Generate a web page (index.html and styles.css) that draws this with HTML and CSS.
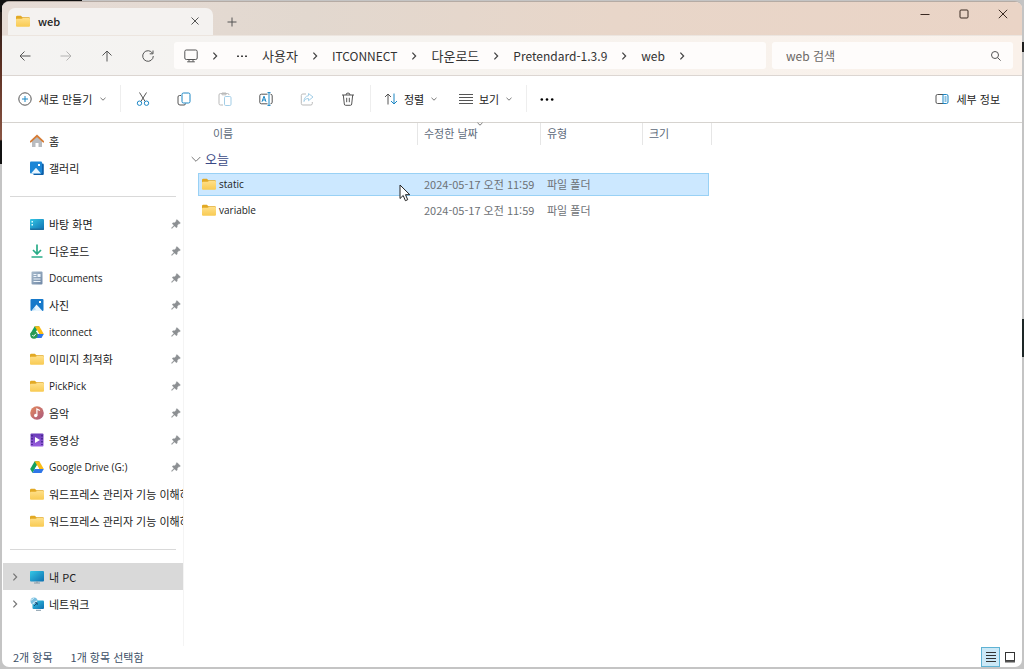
FILE: index.html
```html
<!DOCTYPE html>
<html lang="ko">
<head>
<meta charset="utf-8">
<title>web</title>
<link rel="stylesheet" href="styles.css">
</head>
<body>
<svg class="sprite" aria-hidden="true">
  <defs>
    <linearGradient id="gold" x1="0" y1="0" x2="0" y2="1"><stop offset="0" stop-color="#ffe08a"/><stop offset="1" stop-color="#f8ca52"/></linearGradient>
    <linearGradient id="sea" x1="0" y1="0" x2="1" y2="1"><stop offset="0" stop-color="#35c8e6"/><stop offset="1" stop-color="#0d6fb0"/></linearGradient>
    <linearGradient id="rose" x1="0" y1="0" x2="1" y2="1"><stop offset="0" stop-color="#e58a5c"/><stop offset="1" stop-color="#a8587f"/></linearGradient>
    <linearGradient id="plum" x1="0" y1="0" x2="0" y2="1"><stop offset="0" stop-color="#6a3bb8"/><stop offset="1" stop-color="#9a5fe0"/></linearGradient>
    <linearGradient id="slate" x1="0" y1="0" x2="1" y2="1"><stop offset="0" stop-color="#a9bccd"/><stop offset="1" stop-color="#7088a6"/></linearGradient>
  </defs>
  <symbol id="folder" viewBox="0 0 14 14"><path d="M0 3a1.200 1.200 0 0 1 1.200-1.200h3.600L6.500 3.300H12.800A1.200 1.200 0 0 1 14 4.500V7H0z" fill="#e2a924"/><path d="M0 5.800a1 1 0 0 1 1-1h4.500L7 3.900h6a1 1 0 0 1 1 1v6.900a1 1 0 0 1-1 1H1a1 1 0 0 1-1-1z" fill="url(#gold)"/></symbol>
  <symbol id="pin" viewBox="0 0 10 10"><path d="M6 .6 9.400 4 8.700 4.800 8 4.600 6.300 6.300 6.200 8 5.400 8.800 3.500 6.900.8 9.500.4 9.100 3 6.400 1.200 4.600 2 3.800 3.700 3.700 5.400 2 5.200 1.300z" fill="#8c8f92" stroke="#8c8f92" stroke-width=".4"/></symbol>
  <symbol id="chev" viewBox="0 0 8 8"><path d="M2.700 1.300 5.300 4 2.700 6.700" fill="none" stroke="currentColor"/></symbol>
  <symbol id="down" viewBox="0 0 8 8"><path d="M1.500 2.800 4 5.200 6.500 2.800" fill="none" stroke="currentColor"/></symbol>
  <symbol id="drive" viewBox="0 0 14 14"><path d="M4.700 1.200h4.600L4.700 9.200 2.500 13 .2 9z" fill="#16a05d"/><path d="M4.700 1.200h4.600L13.800 9H9.200z" fill="#fbbc16"/><path d="M4.700 9h9.100l-2.300 4H2.500z" fill="#2f76e8"/><path d="m7 5.200 2.200 3.800H4.700z" fill="#fff"/></symbol>
  <symbol id="photo" viewBox="0 0 14 14"><rect x=".5" y="1" width="13" height="12" rx="1" fill="#1679ca"/><path d="M1.500 13 6.500 6.500 12.500 13z" fill="#e9f6ff"/><path d="m1.500 13 3-3.500L6 11.500z" fill="#b9def7"/><rect x="9" y="3" width="2" height="2" fill="#fff"/></symbol>
</svg>

<div class="window">
  <header class="titlebar">
    <div class="tab">
      <svg class="i14"><use href="#folder"/></svg>
      <span class="tab-name">web</span>
      <button class="flat" aria-label="탭 닫기"><svg class="i10" viewBox="0 0 10 10"><path d="M1.500 1.500l7 7M8.500 1.500l-7 7" class="ln"/></svg></button>
    </div>
    <button class="flat new-tab" aria-label="새 탭"><svg class="i10" viewBox="0 0 10 10"><path d="M5 .5v9M.5 5h9" class="ln"/></svg></button>
    <div class="controls">
      <button class="flat" aria-label="최소화"><svg class="i10" viewBox="0 0 10 10"><path d="M.5 5.500h9" class="dk"/></svg></button>
      <button class="flat" aria-label="최대화"><svg class="i10" viewBox="0 0 10 10"><rect x="1" y="1" width="8" height="8" rx="1" class="dk"/></svg></button>
      <button class="flat" aria-label="닫기"><svg class="i10" viewBox="0 0 10 10"><path d="M.8.8l8.400 8.400M9.200.8.800 9.200" class="dk"/></svg></button>
    </div>
  </header>

  <div class="navbar">
    <div class="arrows">
      <button class="flat" aria-label="뒤로"><svg class="i14" viewBox="0 0 14 14"><path d="M12.500 7H2M6.500 2.500 2 7l4.500 4.500" class="ln"/></svg></button>
      <button class="flat faded" aria-label="앞으로"><svg class="i14" viewBox="0 0 14 14"><path d="M1.500 7H12M7.500 2.500 12 7l-4.500 4.500" class="ln"/></svg></button>
      <button class="flat" aria-label="위로"><svg class="i14" viewBox="0 0 14 14"><path d="M7 12.500V2M2.500 6.500 7 2l4.500 4.500" class="ln"/></svg></button>
      <button class="flat" aria-label="새로 고침"><svg class="i14" viewBox="0 0 14 14"><path d="M11.500 4.200A5.300 5.300 0 1 0 12.300 7M12 1.500v3.300H8.700" class="ln"/></svg></button>
    </div>
    <nav class="address" aria-label="경로">
      <svg class="i14" viewBox="0 0 14 14"><rect x=".8" y="1" width="12.400" height="9.500" rx="1.500" class="ln"/><path d="M5 10.500v2M9 10.500v2M3.200 12.800h7.600" class="ln"/></svg>
      <svg class="i10 sep"><use href="#chev"/></svg>
      <svg class="i12 dots" viewBox="0 0 12 12"><path d="M1 5.500h2v1.500H1zM5 5.500h2v1.500H5zM9 5.500h2v1.500H9z" fill="#444"/></svg>
      <a href="#">사용자</a><svg class="i10 sep"><use href="#chev"/></svg>
      <a href="#" class="latin">ITCONNECT</a><svg class="i10 sep"><use href="#chev"/></svg>
      <a href="#">다운로드</a><svg class="i10 sep"><use href="#chev"/></svg>
      <a href="#" class="latin">Pretendard-1.3.9</a><svg class="i10 sep"><use href="#chev"/></svg>
      <a href="#" class="latin">web</a><svg class="i10 sep"><use href="#chev"/></svg>
    </nav>
    <label class="search">
      <input type="search" placeholder="web 검색" aria-label="web 검색">
      <svg class="i12" viewBox="0 0 12 12"><circle cx="5" cy="5" r="3.500" class="ln"/><path d="m7.600 7.600 3 3" class="ln"/></svg>
    </label>
  </div>

  <div class="commands">
    <button class="flat create"><svg class="i14" viewBox="0 0 14 14"><circle cx="7" cy="7" r="6.200" class="ln"/><path d="M7 4v6M4 7h6" class="bl"/></svg>새로 만들기<svg class="i8"><use href="#down"/></svg></button>
    <div class="tools">
      <button class="flat" aria-label="잘라내기"><svg class="i14" viewBox="0 0 14 14"><path d="M3.500.5 9 9.300M10.500.5 5 9.300" class="ln"/><circle cx="3.500" cy="11.200" r="2.200" class="bl"/><circle cx="10.500" cy="11.200" r="2.200" class="bl"/></svg></button>
      <button class="flat" aria-label="복사"><svg class="i14" viewBox="0 0 14 14"><path d="M4 3.500H2.500a1.500 1.500 0 0 0-1.500 1.500v6a2 2 0 0 0 2 2h4a1.500 1.500 0 0 0 1.500-1.500" class="ln"/><rect x="5" y="1" width="8" height="10" rx="1.500" class="bl"/></svg></button>
      <button class="flat faded" aria-label="붙여넣기"><svg class="i14" viewBox="0 0 14 14"><path d="M5 13H2.500A1.500 1.500 0 0 1 1 11.500V3a1.500 1.500 0 0 1 1.500-1.500h7A1.500 1.500 0 0 1 11 3M4 1h4v1.800H4z" class="ln"/><rect x="6.500" y="4.500" width="6.500" height="9" rx="1.200" class="bl"/></svg></button>
      <button class="flat" aria-label="이름 바꾸기"><svg class="i14" viewBox="0 0 14 14"><path d="M8.500 2.200H2.300A1.500 1.500 0 0 0 .8 3.700v6.600a1.500 1.500 0 0 0 1.500 1.500h6.200M11.500 2.200a1.700 1.700 0 0 1 1.700 1.700v6.200a1.700 1.700 0 0 1-1.700 1.700" class="ln"/><path d="M10 .6v12.800M8.500.6h3M8.500 13.400h3M3 9.800l2-5.600 2 5.600M3.700 8h2.600" class="bl"/></svg></button>
      <button class="flat faded" aria-label="공유"><svg class="i14" viewBox="0 0 14 14"><path d="M6 2H2.800A1.500 1.500 0 0 0 1.300 3.500v8A1.500 1.500 0 0 0 2.800 13h8a1.500 1.500 0 0 0 1.500-1.500V10" class="ln"/><path d="M8.500 1.500 13 5 8.500 8.700V6.500C6 6.500 4.700 7.500 4 9.500c0-3 1.500-5.500 4.500-5.800z" class="bl"/></svg></button>
      <button class="flat" aria-label="삭제"><svg class="i14" viewBox="0 0 14 14"><path d="M1 3h12M5 3a2 2 0 0 1 4 0M2.300 3l1 9a1.300 1.300 0 0 0 1.300 1.300h4.800a1.300 1.300 0 0 0 1.300-1.300l1-9M5.700 5.800v4.400M8.300 5.800v4.400" class="ln"/></svg></button>
    </div>
    <button class="flat sort"><svg class="i14" viewBox="0 0 14 14"><path d="M4 12.500V2M1 5l3-3 3 3" class="ln"/><path d="M10 1.500V12M7 9l3 3 3-3" class="bl"/></svg>정렬<svg class="i8"><use href="#down"/></svg></button>
    <button class="flat view"><svg class="i14" viewBox="0 0 14 14"><path d="M0 2.500h14M0 5.500h14M0 8.500h14M0 11.500h14" class="ln"/></svg>보기<svg class="i8"><use href="#down"/></svg></button>
    <button class="flat more" aria-label="더 보기"><svg class="i14" viewBox="0 0 14 14"><circle cx="1.800" cy="7.500" r="1.300"/><circle cx="7" cy="7.500" r="1.300"/><circle cx="12.200" cy="7.500" r="1.300"/></svg></button>
    <button class="flat details"><svg class="i14" viewBox="0 0 14 14"><path d="M8 2.500H2.500A1.500 1.500 0 0 0 1 4v6a1.500 1.500 0 0 0 1.500 1.500H8" class="ln"/><path d="M8 2.500h3.500A1.500 1.500 0 0 1 13 4v6a1.500 1.500 0 0 1-1.500 1.500H8zM9.500 5h2M9.500 7h2M9.500 9h2" class="bl"/></svg>세부 정보</button>
  </div>

  <div class="main">
    <nav class="side" aria-label="탐색 창">
      <ul>
        <li><svg class="i14" viewBox="0 0 14 14"><path d="M2 6.500 7 2l5 4.500V13H8.500V9h-3v4H2z" fill="#b9bcc0"/><path d="M.7 7.700 7 1.800l6.300 5.900" fill="none" stroke="#d67c35" stroke-width="1.800" stroke-linecap="round"/></svg><a href="#">홈</a></li>
        <li><svg class="i14" viewBox="0 0 14 14"><path d="M3 2.500h9.500a1.300 1.300 0 0 1 1.300 1.300V13a1 1 0 0 1-1 1H3.500z" fill="#0c5fa8"/><rect y=".5" width="12" height="12" rx="1" fill="#1b86d6"/><path d="M1 12.500 6 6.800l5 5.700z" fill="#e9f6ff"/><rect x="8" y="3" width="2" height="2" fill="#fff"/></svg><a href="#">갤러리</a></li>
      </ul>
      <hr>
      <ul>
        <li><svg class="i14" viewBox="0 0 14 14"><rect y="2" width="14" height="11" rx="1" fill="url(#sea)"/><path d="M1.500 4h1.500v1.500H1.500zM1.500 7h1.500v1.500H1.500z" fill="#dff"/><path d="M0 11.500h14V12a1 1 0 0 1-1 1H1a1 1 0 0 1-1-1z" fill="#1b6fa0"/></svg><a href="#">바탕 화면</a><svg class="i10"><use href="#pin"/></svg></li>
        <li><svg class="i14" viewBox="0 0 14 14"><path d="M7 .5v9.500M3 6l4 4 4-4" fill="none" stroke="#29ac88" stroke-width="1.700"/><path d="M1.500 13h11" stroke="#29ac88" stroke-width="1.500"/></svg><a href="#">다운로드</a><svg class="i10"><use href="#pin"/></svg></li>
        <li><svg class="i14" viewBox="0 0 14 14"><rect x="1.500" y=".5" width="11" height="13" rx="1" fill="url(#slate)"/><path d="M3.500 3.500h3M3.500 5.500h3M3.500 8h7M3.500 10.500h7" stroke="#eef5fb"/><rect x="7.500" y="3" width="3" height="3" fill="#eef5fb"/></svg><a href="#" class="latin">Documents</a><svg class="i10"><use href="#pin"/></svg></li>
        <li><svg class="i14"><use href="#photo"/></svg><a href="#">사진</a><svg class="i10"><use href="#pin"/></svg></li>
        <li><svg class="i14" viewBox="0 0 14 14"><use href="#drive"/><circle cx="4" cy="10" r="3.700" fill="#2a9a55"/><path d="m2.300 10 1.300 1.300 2.300-2.500" fill="none" stroke="#fff"/></svg><a href="#" class="latin">itconnect</a><svg class="i10"><use href="#pin"/></svg></li>
        <li><svg class="i14"><use href="#folder"/></svg><a href="#">이미지 최적화</a><svg class="i10"><use href="#pin"/></svg></li>
        <li><svg class="i14"><use href="#folder"/></svg><a href="#" class="latin">PickPick</a><svg class="i10"><use href="#pin"/></svg></li>
        <li><svg class="i14" viewBox="0 0 14 14"><circle cx="7" cy="7" r="6.800" fill="url(#rose)"/><circle cx="5.700" cy="9.500" r="1.700" fill="#fff"/><path d="M6.900 9.500V3l3 1.500" fill="none" stroke="#fff" stroke-width="1.200"/></svg><a href="#">음악</a><svg class="i10"><use href="#pin"/></svg></li>
        <li><svg class="i14" viewBox="0 0 14 14"><rect x=".5" y=".5" width="13" height="13" rx="1" fill="url(#plum)"/><path d="M2 2v10M12 2v10" stroke="#3e2385" stroke-width="1.500" stroke-dasharray="1.500 1.500"/><path d="m5 4 5 3-5 3z" fill="#fff"/></svg><a href="#">동영상</a><svg class="i10"><use href="#pin"/></svg></li>
        <li><svg class="i14"><use href="#drive"/></svg><a href="#" class="latin">Google Drive (G:)</a><svg class="i10"><use href="#pin"/></svg></li>
        <li><svg class="i14"><use href="#folder"/></svg><a href="#">워드프레스 관리자 기능 이해하기</a></li>
        <li><svg class="i14"><use href="#folder"/></svg><a href="#">워드프레스 관리자 기능 이해하기</a></li>
      </ul>
      <hr>
      <ul class="tree">
        <li class="current"><svg class="i10"><use href="#chev"/></svg><svg class="i14" viewBox="0 0 14 14"><rect y="1" width="14" height="10.500" rx="1" fill="url(#sea)"/><path d="M4 13h6M7 11v2" stroke="#8499a8"/></svg><a href="#">내 PC</a></li>
        <li><svg class="i10"><use href="#chev"/></svg><svg class="i14" viewBox="0 0 14 14"><rect x="2.500" y="3.500" width="11.500" height="8.500" rx="1" fill="url(#sea)"/><path d="M6 13.300h5" stroke="#8499a8"/><circle cx="4" cy="4" r="3.500" fill="#78bfe0"/><path d="M1 3c2 0 2-2 3-2M3 7c0-2 3-2 4-3" stroke="#e4f5fb" fill="none"/><path d="m4 9 3-3M5 5.800h2.200V8" stroke="#164f7a" fill="none"/></svg><a href="#">네트워크</a></li>
      </ul>
    </nav>

    <main class="files">
      <table>
        <colgroup><col class="c-name"><col class="c-date"><col class="c-type"><col class="c-size"></colgroup>
        <thead><tr><th scope="col">이름</th><th scope="col" class="sorted">수정한 날짜<svg class="i8"><use href="#down"/></svg></th><th scope="col">유형</th><th scope="col">크기</th></tr></thead>
        <tbody>
          <tr class="group"><td colspan="4"><button class="flat"><svg class="i10" viewBox="0 0 10 10"><path d="M.7 3 5 7.300 9.300 3" fill="none" stroke="#777"/></svg>오늘</button></td></tr>
          <tr class="selected"><td><span class="file"><svg class="i14"><use href="#folder"/></svg><span class="latin">static</span></span></td><td>2024-05-17 오전 11:59</td><td>파일 폴더</td><td></td></tr>
          <tr><td><span class="file"><svg class="i14"><use href="#folder"/></svg><span class="latin">variable</span></span></td><td>2024-05-17 오전 11:59</td><td>파일 폴더</td><td></td></tr>
        </tbody>
      </table>
      <svg class="pointer" viewBox="0 0 12 18"><path d="M1 1v13.500l3.200-3 2.200 5.200 2.300-1-2.200-5h4.300z" fill="#fff" stroke="#222"/></svg>
    </main>
  </div>

  <footer class="status">
    <span>2개 항목</span><span>1개 항목 선택함</span>
    <div class="modes">
      <button class="flat on" aria-label="자세히"><svg class="i12" viewBox="0 0 12 12"><path d="M1 1.500h10M1 4.500h10M1 7.500h10M1 10.500h10" stroke="#333"/></svg></button>
      <button class="flat" aria-label="큰 아이콘"><svg class="i12" viewBox="0 0 12 12"><rect x="1.500" y="1.500" width="9" height="8" fill="none" stroke="#333"/><path d="M1 10.500h10" stroke="#555" stroke-width="2"/></svg></button>
    </div>
  </footer>
</div>
</body>
</html>
```
FILE: styles.css
```css
* { box-sizing: border-box; }
body {
  margin: 0;
  height: 100vh;
  padding: 1px 2px 2px;
  display: flex;
  font: 11px/16px "Noto Sans CJK KR", sans-serif;
  color: #222;
  background:
    linear-gradient(#111, #111) 0 0 / 82px 12px no-repeat,
    linear-gradient(#181818, #5b2f22 40%, #8a5644 85%, #111 86%) 0 0 / 6px 164px no-repeat,
    linear-gradient(#1d1d1d, #1d1d1d) 100% 42px / 2px 10px no-repeat,
    linear-gradient(#1d2626, #1d2626) 100% 319px / 2px 38px no-repeat,
    #c4c4c4;
}
.sprite { position: absolute; width: 0; height: 0; }
svg { flex: none; display: block; }
.i8 { width: 8px; height: 8px; color: #777; }
.i10 { width: 10px; height: 10px; }
.i12 { width: 12px; height: 12px; }
.i14 { width: 14px; height: 14px; }
.ln { fill: none; stroke: #555; }
.dk { fill: none; stroke: #3a2a22; }
.bl { fill: none; stroke: #1b86c4; }
.faded { opacity: .4; }
a { color: inherit; text-decoration: none; white-space: nowrap; }
.flat {
  border: 0;
  padding: 0;
  background: none;
  font: inherit;
  color: inherit;
  display: flex;
  align-items: center;
  justify-content: center;
  white-space: nowrap;
}
.window {
  flex: 1;
  min-width: 0;
  display: flex;
  flex-direction: column;
  background: #fff;
  border-radius: 7px;
  border-top: 1px solid #b5aba4;
  overflow: hidden;
}
.titlebar {
  height: 33px;
  flex: none;
  display: flex;
  align-items: flex-end;
  background: linear-gradient(90deg, #e6dcd6, #e2d8cf 30%, #e8d6c9 60%, #ead4c6);
}
.tab {
  width: 205px;
  height: 27px;
  margin-left: 6px;
  padding: 0 13px 2px 8px;
  display: flex;
  align-items: center;
  background: #f4f2f0;
  border-radius: 7px 7px 0 0;
}
.tab-name { flex: 1; margin-left: 8px; font-weight: 500; }
.new-tab { width: 38px; height: 27px; }
.controls { margin-left: auto; align-self: flex-start; display: flex; }
.controls .flat { width: 39px; height: 24px; }
.navbar {
  height: 41px;
  flex: none;
  display: flex;
  align-items: center;
  gap: 6px;
  padding-right: 9px;
  background: linear-gradient(90deg, #f4f3f2, #f6f3ef 45%, #faf1ea);
  border-top: 1px solid #ece5df;
  border-bottom: 1px solid #dcd6d2;
}
.arrows { display: flex; padding-left: 2px; width: 166px; }
.arrows .flat { width: 41px; height: 27px; }
.address, .search {
  height: 27px;
  display: flex;
  align-items: center;
  background: #fefcfb;
  border-radius: 3px;
  font-size: 12px;
}
.address { flex: 1; min-width: 0; padding-left: 10px; overflow: hidden; font-size: 13px; color: #333; }
.address .latin { font-size: 12px; }
.sep { margin: 0 12px; color: #444; }
.dots { margin: 0 14px 0 4px; }
.search { width: 241px; padding: 0 11px 0 14px; }
.search input {
  flex: 1;
  min-width: 0;
  padding: 0;
  border: 0;
  outline: 0;
  background: none;
  font: inherit;
}
.search input::placeholder { color: #6b6865; opacity: 1; }
.commands {
  height: 47px;
  flex: none;
  display: flex;
  align-items: center;
  padding-bottom: 1px;
  border-bottom: 1px solid #d6d3cf;
}
.create { width: 118px; height: 27px; padding-left: 3px; gap: 7px; }
.tools { display: flex; padding: 0 2px 0 1px; border: solid #eee; border-width: 0 1px; }
.tools .flat { width: 41px; height: 27px; }
.sort, .view { height: 27px; gap: 6px; justify-content: flex-start; }
.sort { width: 88px; padding-left: 13px; }
.view { width: 68px; border-right: 1px solid #eee; }
.more { width: 40px; }
.details { margin-left: auto; margin-right: 22px; gap: 7px; }
.main { flex: 1; min-height: 0; display: flex; }
.side { width: 182px; padding-top: 4px; border-right: 1px solid #f4f4f4; }
.side ul { list-style: none; margin: 0; padding: 0; }
.side li {
  height: 27px;
  padding-left: 28px;
  display: flex;
  align-items: center;
  gap: 5px;
}
.side li a { flex: 1; min-width: 0; overflow: hidden; }
.side .latin, .files .latin { font-family: "Open Sans", sans-serif; font-size: 10px; }
.side li a + svg { margin-right: 2px; }
.side hr { border: 0; height: 1px; margin: 15px 7px 13px 8px; background: #d9d9d9; }
.side .tree li { padding-left: 8px; gap: 10px; }
.tree .i10 { color: #777; }
.tree a { margin-left: -5px; }
.side .tree .current { background: #d9d9d9; margin-left: 1px; padding-left: 7px; }
.files { flex: 1; min-width: 0; position: relative; padding-left: 14px; }
table { border-spacing: 0; table-layout: fixed; width: 514px; color: #6d7175; }
.c-name { width: 220px; }
.c-date { width: 123px; }
.c-type { width: 102px; }
.c-size { width: 69px; }
th {
  position: relative;
  height: 22px;
  padding: 0 6px 2px;
  text-align: left;
  font-weight: 400;
  color: #5d6a7a;
  border-right: 1px solid #e6e6e6;
}
th:first-child { padding-left: 15px; }
th .i8 { position: absolute; left: 58px; top: -3px; }
td { height: 26px; padding: 0 6px 2px; white-space: nowrap; border-bottom: 3px solid transparent; background-clip: padding-box; }
td:first-child { padding-left: 4px; color: #222; }
td:last-child { border-right: 3px solid transparent; }
.file { display: flex; align-items: center; gap: 3px; }
.group td { height: 28px; border: 0; }
.group td:first-child { padding: 0; border: 0; }
.group .flat { font-size: 13px; color: #3b4a86; gap: 4px; margin-left: -7px; }
.selected td { background-color: #cce8ff; box-shadow: inset 0 1px #99d1f5, inset 0 -1px #99d1f5; }
.selected td:first-child { box-shadow: inset 0 1px #99d1f5, inset 0 -1px #99d1f5, inset 1px 0 #99d1f5; }
.selected td:last-child { box-shadow: inset 0 1px #99d1f5, inset 0 -1px #99d1f5, inset -1px 0 #99d1f5; }
.pointer { position: absolute; left: 215px; top: 61px; width: 12px; height: 18px; }
.status {
  height: 21px;
  flex: none;
  display: flex;
  align-items: center;
  gap: 18px;
  padding: 0 3px 0 11px;
  color: #3c4f66;
}
.modes { margin-left: auto; display: flex; }
.modes .flat { width: 19px; height: 20px; }
.modes .on { background: #cbe8f6; border: 1px solid #5fb3d4; }
```
